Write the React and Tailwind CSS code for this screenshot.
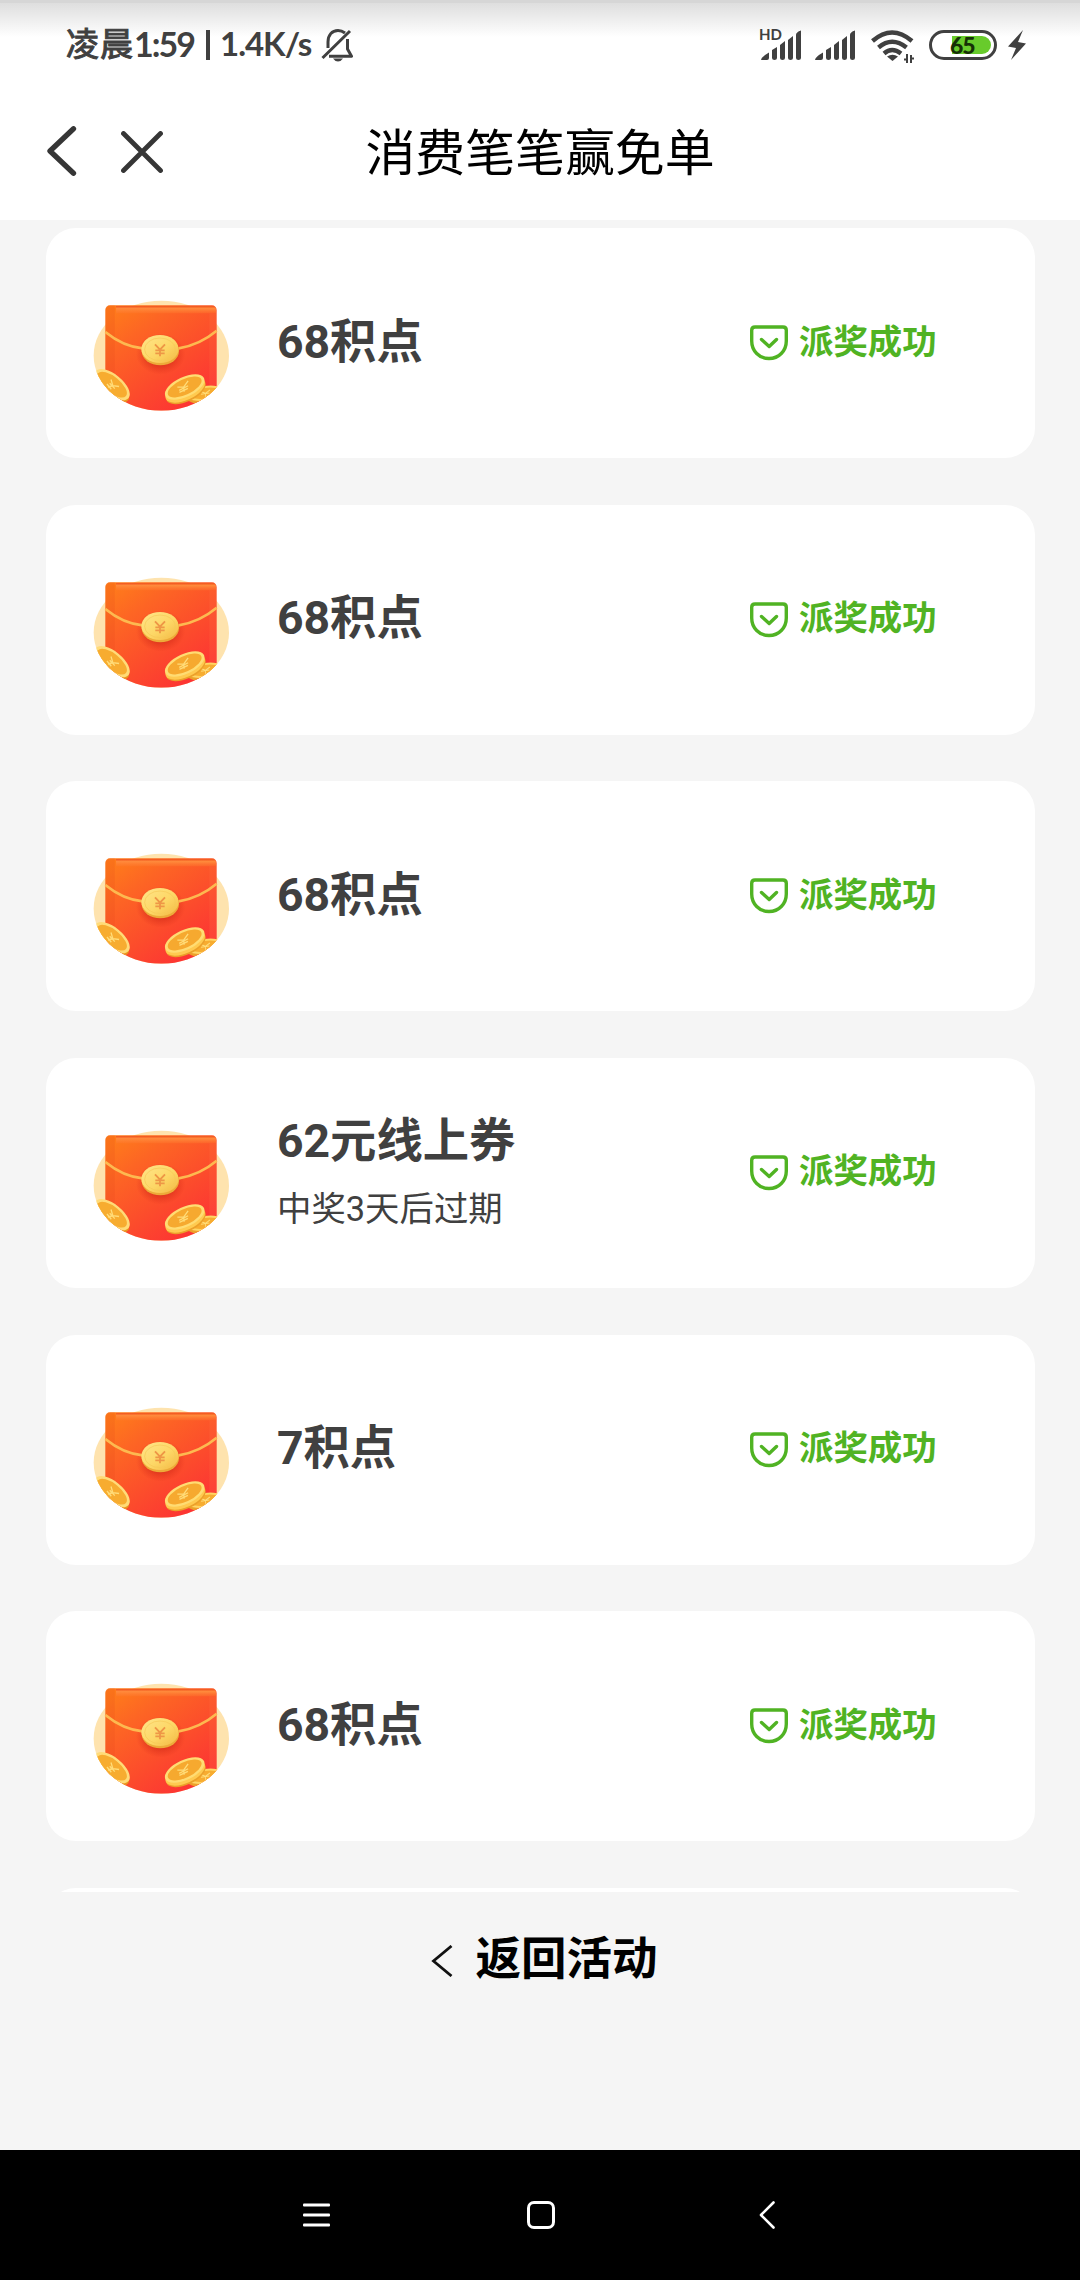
const rows = [
  { title: "68积点" },
  { title: "68积点" },
  { title: "68积点" },
  { title: "62元线上券", note: "中奖3天后过期" },
  { title: "7积点" },
  { title: "68积点" },
];

function RedEnvelope() {
  return (
    <svg viewBox="36 54 420 345" className="mt-[70px] h-[115px] w-[140px] shrink-0 self-start">
      <defs>
        <linearGradient id="paper" x1="0" y1="0" x2="0.75" y2="1">
          <stop offset="0" stopColor="#ff8019" />
          <stop offset="0.3" stopColor="#fd6524" />
          <stop offset="0.65" stopColor="#fc4b2c" />
          <stop offset="1" stopColor="#fd3035" />
        </linearGradient>
        <linearGradient id="fold" x1="0" y1="0" x2="0" y2="1">
          <stop offset="0" stopColor="#f0521c" />
          <stop offset="0.35" stopColor="#ff8a3c" />
          <stop offset="1" stopColor="#ff7a30" stopOpacity="0.35" />
        </linearGradient>
        <linearGradient id="coin" x1="0" y1="0" x2="1" y2="1">
          <stop offset="0" stopColor="#ffe58a" />
          <stop offset="0.55" stopColor="#fdd766" />
          <stop offset="1" stopColor="#f3b843" />
        </linearGradient>
        <radialGradient id="shade">
          <stop offset="0.5" stopColor="#c92414" stopOpacity="0.6" />
          <stop offset="1" stopColor="#d92a1a" stopOpacity="0" />
        </radialGradient>
        <clipPath id="body">
          <rect x="30" y="50" width="430" height="177" />
          <ellipse cx="244" cy="227" rx="203" ry="165" />
        </clipPath>
      </defs>
      <ellipse cx="244" cy="227" rx="203" ry="165" fill="#fee3ae" />
      <g clipPath="url(#body)">
        <rect x="76" y="76" width="334" height="330" rx="14" fill="url(#paper)" />
        <path d="M76 90q0-14 14-14h14v320H76z" fill="#dd3d18" opacity="0.15" />
        <path d="M108 78h288q12 0 12 12v10H108z" fill="url(#fold)" />
        <path d="M388 100h20v215h-20z" fill="#ff7a45" opacity="0.2" />
        <ellipse cx="242" cy="222" rx="74" ry="62" fill="url(#shade)" />
        <path d="M76 156Q130 200 188 205M296 205Q360 194 410 152" fill="none" stroke="#fdb950" strokeWidth="8" />
        <ellipse cx="241" cy="213" rx="56" ry="43" fill="#edaa39" />
        <ellipse cx="240" cy="207" rx="56" ry="42" fill="url(#coin)" />
        <ellipse cx="240" cy="208" rx="46" ry="34" fill="none" stroke="#f6c858" strokeWidth="2" />
        <path d="M225 193l15 16 15-16M240 209v20M226 211h28M226 220h28" fill="none" stroke="#ee9746" strokeWidth="5.500" />
        <g transform="translate(96 314) rotate(39)">
          <ellipse cx="3" cy="7" rx="64" ry="31" fill="#e99620" />
          <ellipse rx="64" ry="31" fill="#ffdb78" />
          <ellipse rx="54" ry="24" fill="#f7ac30" />
          <path d="M-12-10L4 1l16-10M4 1L-5 13M-8 1l22 3M-13 8l20 4" fill="none" stroke="#ffdc78" strokeWidth="4" />
        </g>
        <g transform="translate(376 340) rotate(-8)">
          <ellipse cx="0" cy="8" rx="56" ry="22" fill="#eda02a" />
          <ellipse rx="56" ry="22" fill="#ffd564" />
          <ellipse rx="46" ry="16" fill="#f7ac30" />
          <path d="M-12-7L0 0l15-8M0 0v11M-13 1h25" fill="none" stroke="#ffdc78" strokeWidth="3" />
        </g>
        <g transform="translate(314 321) rotate(-25)">
          <ellipse cx="-2" cy="13" rx="64" ry="31" fill="#eba02a" />
          <ellipse cx="-2" cy="8" rx="64" ry="31" fill="#ffca50" />
          <ellipse rx="64" ry="30" fill="#ffdc73" />
          <ellipse rx="55" ry="23" fill="#f6a92f" />
          <path d="M-20-9L-3-1l20-11M-3-1l-4 13M-19 2l30-1M-21 8l28 0" fill="none" stroke="#ffdc78" strokeWidth="4" />
        </g>
      </g>
    </svg>
  );
}

function RewardCard({ title, note }) {
  return (
    <div className="flex h-[230px] shrink-0 items-center rounded-[30px] bg-white pl-[46px]">
      <RedEnvelope />
      <div className="ml-[45px] flex w-[473px] flex-col text-[#404040]">
        <div className={note ? "mt-[5px] text-[46.300px] leading-[68px] font-bold" : "-mt-[3px] text-[46.300px] leading-[68px] font-bold"}>{title}</div>
        {note && <div className="text-[34.400px] leading-[68px]">{note}</div>}
      </div>
      <div className="flex items-center gap-[11px] text-[#50b323]">
        <svg viewBox="0 0 38 36" className="h-[36px] w-[38px]" fill="none" stroke="currentColor" strokeWidth="3.4" strokeLinejoin="round" strokeLinecap="round">
          <path d="M5 2h28q3.300 0 3.300 3.300v10.700c0 10-7.500 17.500-17.300 17.500S1.700 26 1.700 16V5.300Q1.700 2 5 2z" />
          <path d="M11.500 14.500l7.700 7 7.300-7" />
        </svg>
        <span className="-mt-[3px] text-[34.400px] leading-[50px] font-bold">派奖成功</span>
      </div>
    </div>
  );
}

function Signal() {
  return (
    <svg viewBox="0 0 42 30" className="h-[30px] w-[42px]" fill="#404040">
      <path d="M0 30q0-3 8-7.500V28q0 2-2 2zM11 20l5-3v11q0 2-2.500 2T11 28zM19 15l5-4v17q0 2-2.500 2T19 28zM27 10l5-4v22q0 2-2.500 2T27 28zM35 5q0-3 5-4.500V28q0 2-2.500 2T35 28z" />
    </svg>
  );
}

function StatusBar() {
  return (
    <div className="h-[90px] border-t-[3px] border-[#d6d6d6] bg-linear-to-b from-[#dedede] to-white to-[34px]">
      <div className="flex h-[84px] items-center pl-[66px] text-[#404040]">
        <span className="w-[68px] text-[33px] tracking-[1px] [-webkit-text-stroke:1px_#404040]">凌晨</span>
        <span className="-mt-[3px] w-[69px] font-['Lato'] text-[34px] font-bold tracking-[-2px]">1:59</span>
        <span className="mr-[10px] ml-[3px] h-[30px] w-[4px] bg-[#404040]" />
        <span className="-mt-[2px] w-[101px] font-['Lato'] text-[33px] font-bold tracking-[-1px] whitespace-nowrap">1.4K/s</span>
        <svg viewBox="0 0 32 33" className="h-[33px] w-[32px]" fill="none" stroke="#404040" strokeWidth="3">
          <path d="M1.500 29L29 2M7 19v-6c0-7 4-11.500 10-11.500 3 0 5 1 7 2.500M26.500 10v10l4 7.200H8" strokeLinejoin="round" />
          <path d="M12 29.500h10q-2 3-5 3t-5-3z" fill="#404040" stroke="none" />
        </svg>
        <div className="relative ml-[408px] flex items-center">
          <span className="absolute -top-[5px] -left-[2px] font-['Lato'] text-[15px] leading-[18px] font-bold">HD</span>
          <Signal />
        </div>
        <div className="ml-[12px] flex"><Signal /></div>
        <svg viewBox="0 0 44 35" className="mt-[3px] ml-[14px] h-[35px] w-[44px]" fill="none" stroke="#404040" strokeWidth="4.400">
          <path d="M1.500 12Q21 -5 41 12M7.500 18.500Q21 7 35.500 18.500M13 24.500Q21 17.500 30 24.500" />
          <path d="M16 27.500q5.500-3.500 11 0L21.500 32z" fill="#404040" stroke="none" />
          <path d="M36 25v9M33 30.500h3M40 34v-8M40 29.500h3" strokeWidth="2" />
        </svg>
        <div className="relative ml-[14px] flex h-[30px] w-[68px] items-center justify-end rounded-full border-[3px] border-[#404040] bg-white p-[3px]">
          <div className="h-[18px] w-[39px] rounded-r-full bg-[#68cb2b]" />
          <span className="absolute left-[18px] font-['Lato'] text-[23px] leading-[24px] font-black tracking-[-1px] text-[#163006]">65</span>
        </div>
        <svg viewBox="0 0 20 30" className="ml-[10px] h-[30px] w-[20px]" fill="#404040">
          <path d="M16 0L1 16.500l8 1.500-5 12L19 13.500 11 12z" />
        </svg>
      </div>
    </div>
  );
}

export default function App() {
  return (
    <div className="flex h-[2280px] w-[1080px] flex-col overflow-hidden bg-[#f5f5f5] font-['Roboto','Noto_Sans_CJK_SC',sans-serif]">
      <header className="h-[220px] shrink-0 bg-white">
        <StatusBar />
        <div className="grid h-[122px] grid-cols-[1fr_auto_1fr] items-center">
          <div className="flex items-center gap-[44px] pl-[46px]">
            <svg viewBox="0 0 31 50" className="h-[50px] w-[31px]" fill="none" stroke="#363636" strokeWidth="5.300" strokeLinecap="round" strokeLinejoin="round">
              <path d="M27.500 2.800L4 25l23.500 22.200" />
            </svg>
            <svg viewBox="0 0 42 42" className="mt-[2px] h-[42px] w-[42px]" fill="none" stroke="#363636" strokeWidth="4.800" strokeLinecap="round">
              <path d="M2.500 2.500l37 37M39.500 2.500l-37 37" />
            </svg>
          </div>
          <h1 className="mt-[5px] text-[49.900px] leading-[70px] text-black">消费笔笔赢免单</h1>
        </div>
      </header>
      <main className="flex h-[1672px] shrink-0 flex-col gap-[46.670px] overflow-hidden pt-2 pr-[45px] pl-[46px]">
        {rows.map((row, i) => (
          <RewardCard key={i} {...row} />
        ))}
        <div className="h-[230px] shrink-0 rounded-[30px] bg-white" />
      </main>
      <footer className="flex h-[258px] shrink-0 items-start justify-center pt-[34px] pl-[9px] text-black">
        <svg viewBox="0 0 22 32" className="mt-[19px] mr-[22px] h-[32px] w-[22px]" fill="none" stroke="#111" strokeWidth="2.800">
          <path d="M20.500 1L2.500 16l18 15" />
        </svg>
        <span className="text-[45.500px] leading-[68px] font-bold">返回活动</span>
      </footer>
      <nav className="flex h-[130px] shrink-0 items-center bg-black pl-[302px]">
        <svg viewBox="0 0 28 24" className="h-[24px] w-[28px]" fill="#fff">
          <rect x="1" y="0.500" width="27" height="3" rx="1" />
          <rect x="1" y="10.500" width="27" height="3" rx="1" />
          <rect x="1" y="20.500" width="27" height="3" rx="1" />
        </svg>
        <div className="ml-[197px] h-[28px] w-[28px] rounded-[7px] border-[3px] border-white" />
        <svg viewBox="0 0 16 28" className="ml-[204px] h-[28px] w-[16px]" fill="none" stroke="#fff" strokeWidth="2.600" strokeLinecap="round" strokeLinejoin="round">
          <path d="M14.500 1.500L2 14l12.500 12.500" />
        </svg>
      </nav>
    </div>
  );
}
